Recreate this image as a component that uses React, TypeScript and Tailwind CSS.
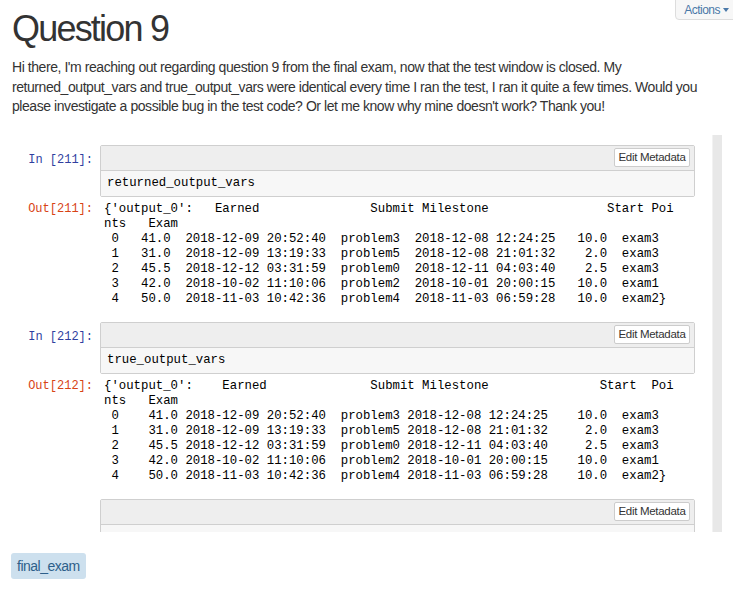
import React from "react";

const out1 = [
  "{'output_0':   Earned".padEnd(36) + "Submit Milestone".padEnd(32) + "Start Poi",
  "nts   Exam",
  " 0   41.0  2018-12-09 20:52:40  problem3  2018-12-08 12:24:25   10.0  exam3",
  " 1   31.0  2018-12-09 13:19:33  problem5  2018-12-08 21:01:32    2.0  exam3",
  " 2   45.5  2018-12-12 03:31:59  problem0  2018-12-11 04:03:40    2.5  exam3",
  " 3   42.0  2018-10-02 11:10:06  problem2  2018-10-01 20:00:15   10.0  exam1",
  " 4   50.0  2018-11-03 10:42:36  problem4  2018-11-03 06:59:28   10.0  exam2}",
];

const out2 = [
  "{'output_0':    Earned".padEnd(36) + "Submit Milestone".padEnd(31) + "Start  Poi",
  "nts   Exam",
  " 0    41.0 2018-12-09 20:52:40  problem3 2018-12-08 12:24:25    10.0  exam3",
  " 1    31.0 2018-12-09 13:19:33  problem5 2018-12-08 21:01:32     2.0  exam3",
  " 2    45.5 2018-12-12 03:31:59  problem0 2018-12-11 04:03:40     2.5  exam3",
  " 3    42.0 2018-10-02 11:10:06  problem2 2018-10-01 20:00:15    10.0  exam1",
  " 4    50.0 2018-11-03 10:42:36  problem4 2018-11-03 06:59:28    10.0  exam2}",
];

const mono = "font-['Liberation_Mono','Courier_New',monospace]";

function Cell({ n, code }: { n?: number; code?: string }) {
  return (
    <div className="flex">
      <div className={`w-[88px] pr-[7px] pt-[8px] text-right text-[12px] leading-[15px] whitespace-pre text-[#303f9f] ${mono}`}>
        {n ? `In [${n}]:` : ""}
      </div>
      <div className="w-[595px] shrink-0 rounded-[2px] border border-[#cfcfcf]">
        <div className="flex h-[25px] items-start justify-end border-b border-[#cfcfcf] bg-[#eeeeee] pt-[2px] pr-[4px]">
          <button className="h-[19px] w-[76px] rounded-[2px] border border-[#cccccc] bg-white text-[11.5px] leading-[17px] tracking-[-0.3px] text-[#333]">
            Edit Metadata
          </button>
        </div>
        <div className={`h-[25px] bg-[#f7f7f7] px-[6px] text-[12.33px] leading-[25px] text-black ${mono}`}>
          {code}
        </div>
      </div>
    </div>
  );
}

function Output({ n, lines }: { n: number; lines: string[] }) {
  return (
    <div className="mt-[5px] flex">
      <div className={`w-[88px] pr-[7px] text-right text-[12px] leading-[15px] text-[#d84315] ${mono}`}>
        Out[{n}]:
      </div>
      <div className={`pl-[4px] text-[12.33px] leading-[15px] whitespace-pre text-black ${mono}`}>
        {lines.map((l, i) => (
          <div key={i}>{l}</div>
        ))}
      </div>
    </div>
  );
}

export default function App() {
  return (
    <div className="relative h-[592px] w-[733px] overflow-hidden bg-white font-['Liberation_Sans',Arial,sans-serif] text-[#333]">
      {/* actions dropdown */}
      <button className="absolute right-[-6px] top-[-1px] flex h-[21px] items-center gap-[3px] rounded-bl-[4px] border border-[#dddddd] bg-[#f7f7f7] pl-[8px] pr-[9px] text-[12px] tracking-[-0.5px] text-[#4a78a8]">
        Actions
        <span className="inline-block h-0 w-0 border-x-[3px] border-t-[4px] border-x-transparent border-t-[#4a78a8]" />
      </button>

      <div className="pl-3 pt-[9px]">
        <h1 className="text-[36px] leading-[40px] font-normal tracking-[-1.8px]">Question 9</h1>
        <p className="mt-[9px] text-[14px] leading-[19.5px] whitespace-nowrap tracking-[-0.44px]">
          Hi there, I'm reaching out regarding question 9 from the final exam, now that the test window is closed. My
          <br />
          returned_output_vars and true_output_vars were identical every time I ran the test, I ran it quite a few times. Would you
          <br />
          please investigate a possible bug in the test code? Or let me know why mine doesn't work? Thank you!
        </p>

        {/* notebook screenshot */}
        <div className="mt-[18px] flex h-[397px] w-[710px] overflow-hidden bg-white">
          <div className="flex-1 pt-[10px]">
            <Cell n={211} code="returned_output_vars" />
            <Output n={211} lines={out1} />
            <div className="mt-[15px]">
              <Cell n={212} code="true_output_vars" />
            </div>
            <Output n={212} lines={out2} />
            <div className="mt-[15px]">
              <Cell />
            </div>
          </div>
          <div className="w-[10px] border-l border-[#f2f2f2] bg-[#e8e8e8]" />
        </div>

        <div className="mt-[21px] -ml-px">
          <span className="inline-block h-[26px] rounded-[3px] bg-[#cde0ee] px-[6px] text-[14px] leading-[26px] tracking-[-0.5px] text-[#2d5f8a]">
            final_exam
          </span>
        </div>
      </div>
    </div>
  );
}
